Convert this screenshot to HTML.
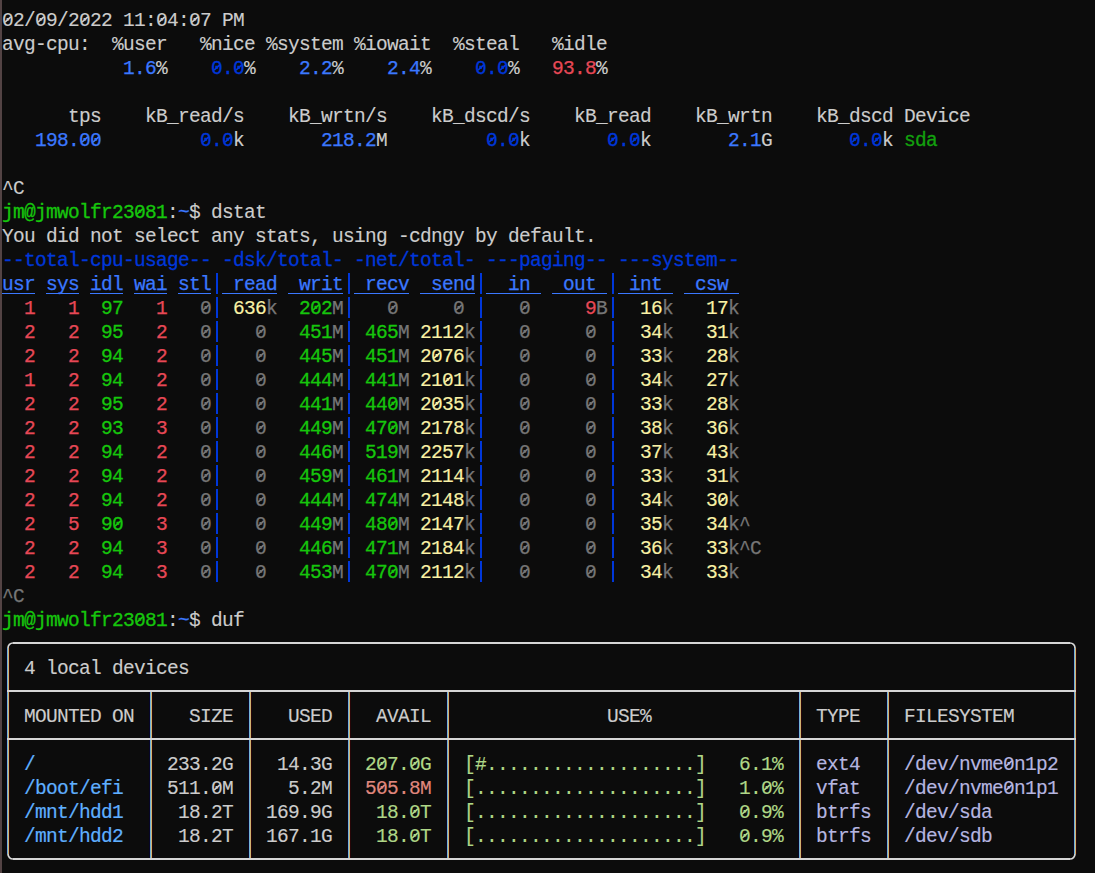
<!DOCTYPE html>
<html><head><meta charset="utf-8"><title>terminal</title>
<style>
html,body{margin:0;padding:0;background:#0c0c0c}
#t{position:relative;width:1095px;height:873px;overflow:hidden;background:#0c0c0c;font-family:"Liberation Mono",monospace;font-size:19.5px;line-height:24px;letter-spacing:-0.7019px;color:#ccc;white-space:pre}
#t i{position:absolute;display:block;box-sizing:content-box}
#t b{position:absolute;display:block;font-weight:normal;height:24px}
.cf{color:#cccccc;-webkit-text-stroke:0.12px}
.cb{color:#0037da;-webkit-text-stroke:0.3px}
.cB{color:#3b78ff;-webkit-text-stroke:0.25px}
.cr{color:#c50f1f;-webkit-text-stroke:0.25px}
.cR{color:#e74856;-webkit-text-stroke:0.25px}
.cg{color:#13a10e;-webkit-text-stroke:0.3px}
.cG{color:#16c60c;-webkit-text-stroke:0.3px}
.cy{color:#c19c00;-webkit-text-stroke:0.15px}
.cY{color:#f9f1a5;-webkit-text-stroke:0.15px}
.ck{color:#767676;-webkit-text-stroke:0.25px}
.cdb{color:#5fafff;-webkit-text-stroke:0.2px}
.cdg{color:#afd787;-webkit-text-stroke:0.15px}
.cdr{color:#e0877d;-webkit-text-stroke:0.15px}
.cdk{color:#b6b6e0;-webkit-text-stroke:0.15px}
</style></head><body>
<div id="t">
<i style="left:0;top:0;width:2px;height:873px;background:#534344"></i>
<b class="cf" style="left:2px;top:9px">02/09/2022 11:04:07 PM</b>
<b class="cf" style="left:2px;top:33px">avg-cpu:  %user   %nice %system %iowait  %steal   %idle</b>
<b class="cB" style="left:123px;top:57px">1.6</b><b class="cf" style="left:156px;top:57px">%</b><b class="cb" style="left:211px;top:57px">0.0</b><b class="cf" style="left:244px;top:57px">%</b><b class="cB" style="left:299px;top:57px">2.2</b><b class="cf" style="left:332px;top:57px">%</b><b class="cB" style="left:387px;top:57px">2.4</b><b class="cf" style="left:420px;top:57px">%</b><b class="cb" style="left:475px;top:57px">0.0</b><b class="cf" style="left:508px;top:57px">%</b><b class="cR" style="left:552px;top:57px">93.8</b><b class="cf" style="left:596px;top:57px">%</b>
<b class="cf" style="left:2px;top:105px">      tps    kB_read/s    kB_wrtn/s    kB_dscd/s    kB_read    kB_wrtn    kB_dscd Device</b>
<b class="cB" style="left:35px;top:129px">198.00</b><b class="cb" style="left:200px;top:129px">0.0</b><b class="cf" style="left:233px;top:129px">k</b><b class="cB" style="left:321px;top:129px">218.2</b><b class="cf" style="left:376px;top:129px">M</b><b class="cb" style="left:486px;top:129px">0.0</b><b class="cf" style="left:519px;top:129px">k</b><b class="cb" style="left:607px;top:129px">0.0</b><b class="cf" style="left:640px;top:129px">k</b><b class="cB" style="left:728px;top:129px">2.1</b><b class="cf" style="left:761px;top:129px">G</b><b class="cb" style="left:849px;top:129px">0.0</b><b class="cf" style="left:882px;top:129px">k</b><b class="cg" style="left:904px;top:129px">sda</b>
<b class="cf" style="left:2px;top:177px">^C</b>
<b class="cG" style="left:2px;top:201px">jm@jmwolfr23081</b><b class="cf" style="left:167px;top:201px">:</b><b class="cB" style="left:178px;top:201px">~</b><b class="cf" style="left:189px;top:201px">$ dstat</b>
<b class="cf" style="left:2px;top:225px">You did not select any stats, using -cdngy by default.</b>
<b class="cb" style="left:2px;top:249px">--total-cpu-usage-- -dsk/total- -net/total- ---paging-- ---system--</b>
<b class="cB" style="left:2px;top:273px">usr</b><b class="cB" style="left:46px;top:273px">sys</b><b class="cB" style="left:90px;top:273px">idl</b><b class="cB" style="left:134px;top:273px">wai</b><b class="cB" style="left:178px;top:273px">stl</b><b class="cB" style="left:222px;top:273px"> read</b><b class="cB" style="left:288px;top:273px"> writ</b><b class="cB" style="left:354px;top:273px"> recv</b><b class="cB" style="left:420px;top:273px"> send</b><b class="cB" style="left:486px;top:273px">  in </b><b class="cB" style="left:552px;top:273px"> out </b><b class="cB" style="left:618px;top:273px"> int </b><b class="cB" style="left:684px;top:273px"> csw </b>
<b class="cR" style="left:24px;top:297px">1</b><b class="cR" style="left:68px;top:297px">1</b><b class="cG" style="left:101px;top:297px">97</b><b class="cR" style="left:156px;top:297px">1</b><b class="ck" style="left:200px;top:297px">0</b><b class="cY" style="left:233px;top:297px">636</b><b class="ck" style="left:266px;top:297px">k</b><b class="cG" style="left:299px;top:297px">202</b><b class="ck" style="left:332px;top:297px">M</b><b class="ck" style="left:387px;top:297px">0</b><b class="ck" style="left:453px;top:297px">0</b><b class="ck" style="left:519px;top:297px">0</b><b class="cR" style="left:585px;top:297px">9</b><b class="ck" style="left:596px;top:297px">B</b><b class="cY" style="left:640px;top:297px">16</b><b class="ck" style="left:662px;top:297px">k</b><b class="cY" style="left:706px;top:297px">17</b><b class="ck" style="left:728px;top:297px">k</b>
<b class="cR" style="left:24px;top:321px">2</b><b class="cR" style="left:68px;top:321px">2</b><b class="cG" style="left:101px;top:321px">95</b><b class="cR" style="left:156px;top:321px">2</b><b class="ck" style="left:200px;top:321px">0</b><b class="ck" style="left:255px;top:321px">0</b><b class="cG" style="left:299px;top:321px">451</b><b class="ck" style="left:332px;top:321px">M</b><b class="cG" style="left:365px;top:321px">465</b><b class="ck" style="left:398px;top:321px">M</b><b class="cY" style="left:420px;top:321px">2112</b><b class="ck" style="left:464px;top:321px">k</b><b class="ck" style="left:519px;top:321px">0</b><b class="ck" style="left:585px;top:321px">0</b><b class="cY" style="left:640px;top:321px">34</b><b class="ck" style="left:662px;top:321px">k</b><b class="cY" style="left:706px;top:321px">31</b><b class="ck" style="left:728px;top:321px">k</b>
<b class="cR" style="left:24px;top:345px">2</b><b class="cR" style="left:68px;top:345px">2</b><b class="cG" style="left:101px;top:345px">94</b><b class="cR" style="left:156px;top:345px">2</b><b class="ck" style="left:200px;top:345px">0</b><b class="ck" style="left:255px;top:345px">0</b><b class="cG" style="left:299px;top:345px">445</b><b class="ck" style="left:332px;top:345px">M</b><b class="cG" style="left:365px;top:345px">451</b><b class="ck" style="left:398px;top:345px">M</b><b class="cY" style="left:420px;top:345px">2076</b><b class="ck" style="left:464px;top:345px">k</b><b class="ck" style="left:519px;top:345px">0</b><b class="ck" style="left:585px;top:345px">0</b><b class="cY" style="left:640px;top:345px">33</b><b class="ck" style="left:662px;top:345px">k</b><b class="cY" style="left:706px;top:345px">28</b><b class="ck" style="left:728px;top:345px">k</b>
<b class="cR" style="left:24px;top:369px">1</b><b class="cR" style="left:68px;top:369px">2</b><b class="cG" style="left:101px;top:369px">94</b><b class="cR" style="left:156px;top:369px">2</b><b class="ck" style="left:200px;top:369px">0</b><b class="ck" style="left:255px;top:369px">0</b><b class="cG" style="left:299px;top:369px">444</b><b class="ck" style="left:332px;top:369px">M</b><b class="cG" style="left:365px;top:369px">441</b><b class="ck" style="left:398px;top:369px">M</b><b class="cY" style="left:420px;top:369px">2101</b><b class="ck" style="left:464px;top:369px">k</b><b class="ck" style="left:519px;top:369px">0</b><b class="ck" style="left:585px;top:369px">0</b><b class="cY" style="left:640px;top:369px">34</b><b class="ck" style="left:662px;top:369px">k</b><b class="cY" style="left:706px;top:369px">27</b><b class="ck" style="left:728px;top:369px">k</b>
<b class="cR" style="left:24px;top:393px">2</b><b class="cR" style="left:68px;top:393px">2</b><b class="cG" style="left:101px;top:393px">95</b><b class="cR" style="left:156px;top:393px">2</b><b class="ck" style="left:200px;top:393px">0</b><b class="ck" style="left:255px;top:393px">0</b><b class="cG" style="left:299px;top:393px">441</b><b class="ck" style="left:332px;top:393px">M</b><b class="cG" style="left:365px;top:393px">440</b><b class="ck" style="left:398px;top:393px">M</b><b class="cY" style="left:420px;top:393px">2035</b><b class="ck" style="left:464px;top:393px">k</b><b class="ck" style="left:519px;top:393px">0</b><b class="ck" style="left:585px;top:393px">0</b><b class="cY" style="left:640px;top:393px">33</b><b class="ck" style="left:662px;top:393px">k</b><b class="cY" style="left:706px;top:393px">28</b><b class="ck" style="left:728px;top:393px">k</b>
<b class="cR" style="left:24px;top:417px">2</b><b class="cR" style="left:68px;top:417px">2</b><b class="cG" style="left:101px;top:417px">93</b><b class="cR" style="left:156px;top:417px">3</b><b class="ck" style="left:200px;top:417px">0</b><b class="ck" style="left:255px;top:417px">0</b><b class="cG" style="left:299px;top:417px">449</b><b class="ck" style="left:332px;top:417px">M</b><b class="cG" style="left:365px;top:417px">470</b><b class="ck" style="left:398px;top:417px">M</b><b class="cY" style="left:420px;top:417px">2178</b><b class="ck" style="left:464px;top:417px">k</b><b class="ck" style="left:519px;top:417px">0</b><b class="ck" style="left:585px;top:417px">0</b><b class="cY" style="left:640px;top:417px">38</b><b class="ck" style="left:662px;top:417px">k</b><b class="cY" style="left:706px;top:417px">36</b><b class="ck" style="left:728px;top:417px">k</b>
<b class="cR" style="left:24px;top:441px">2</b><b class="cR" style="left:68px;top:441px">2</b><b class="cG" style="left:101px;top:441px">94</b><b class="cR" style="left:156px;top:441px">2</b><b class="ck" style="left:200px;top:441px">0</b><b class="ck" style="left:255px;top:441px">0</b><b class="cG" style="left:299px;top:441px">446</b><b class="ck" style="left:332px;top:441px">M</b><b class="cG" style="left:365px;top:441px">519</b><b class="ck" style="left:398px;top:441px">M</b><b class="cY" style="left:420px;top:441px">2257</b><b class="ck" style="left:464px;top:441px">k</b><b class="ck" style="left:519px;top:441px">0</b><b class="ck" style="left:585px;top:441px">0</b><b class="cY" style="left:640px;top:441px">37</b><b class="ck" style="left:662px;top:441px">k</b><b class="cY" style="left:706px;top:441px">43</b><b class="ck" style="left:728px;top:441px">k</b>
<b class="cR" style="left:24px;top:465px">2</b><b class="cR" style="left:68px;top:465px">2</b><b class="cG" style="left:101px;top:465px">94</b><b class="cR" style="left:156px;top:465px">2</b><b class="ck" style="left:200px;top:465px">0</b><b class="ck" style="left:255px;top:465px">0</b><b class="cG" style="left:299px;top:465px">459</b><b class="ck" style="left:332px;top:465px">M</b><b class="cG" style="left:365px;top:465px">461</b><b class="ck" style="left:398px;top:465px">M</b><b class="cY" style="left:420px;top:465px">2114</b><b class="ck" style="left:464px;top:465px">k</b><b class="ck" style="left:519px;top:465px">0</b><b class="ck" style="left:585px;top:465px">0</b><b class="cY" style="left:640px;top:465px">33</b><b class="ck" style="left:662px;top:465px">k</b><b class="cY" style="left:706px;top:465px">31</b><b class="ck" style="left:728px;top:465px">k</b>
<b class="cR" style="left:24px;top:489px">2</b><b class="cR" style="left:68px;top:489px">2</b><b class="cG" style="left:101px;top:489px">94</b><b class="cR" style="left:156px;top:489px">2</b><b class="ck" style="left:200px;top:489px">0</b><b class="ck" style="left:255px;top:489px">0</b><b class="cG" style="left:299px;top:489px">444</b><b class="ck" style="left:332px;top:489px">M</b><b class="cG" style="left:365px;top:489px">474</b><b class="ck" style="left:398px;top:489px">M</b><b class="cY" style="left:420px;top:489px">2148</b><b class="ck" style="left:464px;top:489px">k</b><b class="ck" style="left:519px;top:489px">0</b><b class="ck" style="left:585px;top:489px">0</b><b class="cY" style="left:640px;top:489px">34</b><b class="ck" style="left:662px;top:489px">k</b><b class="cY" style="left:706px;top:489px">30</b><b class="ck" style="left:728px;top:489px">k</b>
<b class="cR" style="left:24px;top:513px">2</b><b class="cR" style="left:68px;top:513px">5</b><b class="cG" style="left:101px;top:513px">90</b><b class="cR" style="left:156px;top:513px">3</b><b class="ck" style="left:200px;top:513px">0</b><b class="ck" style="left:255px;top:513px">0</b><b class="cG" style="left:299px;top:513px">449</b><b class="ck" style="left:332px;top:513px">M</b><b class="cG" style="left:365px;top:513px">480</b><b class="ck" style="left:398px;top:513px">M</b><b class="cY" style="left:420px;top:513px">2147</b><b class="ck" style="left:464px;top:513px">k</b><b class="ck" style="left:519px;top:513px">0</b><b class="ck" style="left:585px;top:513px">0</b><b class="cY" style="left:640px;top:513px">35</b><b class="ck" style="left:662px;top:513px">k</b><b class="cY" style="left:706px;top:513px">34</b><b class="ck" style="left:728px;top:513px">k</b><b class="ck" style="left:739px;top:513px">^</b>
<b class="cR" style="left:24px;top:537px">2</b><b class="cR" style="left:68px;top:537px">2</b><b class="cG" style="left:101px;top:537px">94</b><b class="cR" style="left:156px;top:537px">3</b><b class="ck" style="left:200px;top:537px">0</b><b class="ck" style="left:255px;top:537px">0</b><b class="cG" style="left:299px;top:537px">446</b><b class="ck" style="left:332px;top:537px">M</b><b class="cG" style="left:365px;top:537px">471</b><b class="ck" style="left:398px;top:537px">M</b><b class="cY" style="left:420px;top:537px">2184</b><b class="ck" style="left:464px;top:537px">k</b><b class="ck" style="left:519px;top:537px">0</b><b class="ck" style="left:585px;top:537px">0</b><b class="cY" style="left:640px;top:537px">36</b><b class="ck" style="left:662px;top:537px">k</b><b class="cY" style="left:706px;top:537px">33</b><b class="ck" style="left:728px;top:537px">k</b><b class="ck" style="left:739px;top:537px">^C</b>
<b class="cR" style="left:24px;top:561px">2</b><b class="cR" style="left:68px;top:561px">2</b><b class="cG" style="left:101px;top:561px">94</b><b class="cR" style="left:156px;top:561px">3</b><b class="ck" style="left:200px;top:561px">0</b><b class="ck" style="left:255px;top:561px">0</b><b class="cG" style="left:299px;top:561px">453</b><b class="ck" style="left:332px;top:561px">M</b><b class="cG" style="left:365px;top:561px">470</b><b class="ck" style="left:398px;top:561px">M</b><b class="cY" style="left:420px;top:561px">2112</b><b class="ck" style="left:464px;top:561px">k</b><b class="ck" style="left:519px;top:561px">0</b><b class="ck" style="left:585px;top:561px">0</b><b class="cY" style="left:640px;top:561px">34</b><b class="ck" style="left:662px;top:561px">k</b><b class="cY" style="left:706px;top:561px">33</b><b class="ck" style="left:728px;top:561px">k</b>
<b class="ck" style="left:2px;top:585px">^C</b>
<b class="cG" style="left:2px;top:609px">jm@jmwolfr23081</b><b class="cf" style="left:167px;top:609px">:</b><b class="cB" style="left:178px;top:609px">~</b><b class="cf" style="left:189px;top:609px">$ duf</b>
<b class="cf" style="left:24px;top:657px">4 local devices</b>
<b class="cf" style="left:24px;top:705px">MOUNTED ON</b><b class="cf" style="left:189px;top:705px">SIZE</b><b class="cf" style="left:288px;top:705px">USED</b><b class="cf" style="left:376px;top:705px">AVAIL</b><b class="cf" style="left:607px;top:705px">USE%</b><b class="cf" style="left:816px;top:705px">TYPE</b><b class="cf" style="left:904px;top:705px">FILESYSTEM</b>
<b class="cdb" style="left:24px;top:753px">/</b><b class="cf" style="left:167px;top:753px">233.2G</b><b class="cf" style="left:277px;top:753px">14.3G</b><b class="cdg" style="left:365px;top:753px">207.0G</b><b class="cdg" style="left:464px;top:753px">[#...................]</b><b class="cdg" style="left:739px;top:753px">6.1%</b><b class="cdk" style="left:816px;top:753px">ext4</b><b class="cdk" style="left:904px;top:753px">/dev/nvme0n1p2</b>
<b class="cdb" style="left:24px;top:777px">/boot/efi</b><b class="cf" style="left:167px;top:777px">511.0M</b><b class="cf" style="left:288px;top:777px">5.2M</b><b class="cdr" style="left:365px;top:777px">505.8M</b><b class="cdg" style="left:464px;top:777px">[....................]</b><b class="cdg" style="left:739px;top:777px">1.0%</b><b class="cdk" style="left:816px;top:777px">vfat</b><b class="cdk" style="left:904px;top:777px">/dev/nvme0n1p1</b>
<b class="cdb" style="left:24px;top:801px">/mnt/hdd1</b><b class="cf" style="left:178px;top:801px">18.2T</b><b class="cf" style="left:266px;top:801px">169.9G</b><b class="cdg" style="left:376px;top:801px">18.0T</b><b class="cdg" style="left:464px;top:801px">[....................]</b><b class="cdg" style="left:739px;top:801px">0.9%</b><b class="cdk" style="left:816px;top:801px">btrfs</b><b class="cdk" style="left:904px;top:801px">/dev/sda</b>
<b class="cdb" style="left:24px;top:825px">/mnt/hdd2</b><b class="cf" style="left:178px;top:825px">18.2T</b><b class="cf" style="left:266px;top:825px">167.1G</b><b class="cdg" style="left:376px;top:825px">18.0T</b><b class="cdg" style="left:464px;top:825px">[....................]</b><b class="cdg" style="left:739px;top:825px">0.9%</b><b class="cdk" style="left:816px;top:825px">btrfs</b><b class="cdk" style="left:904px;top:825px">/dev/sdb</b>
<i style="left:2px;top:293px;width:33px;height:1px;background:#3b78ff"></i>
<i style="left:46px;top:293px;width:33px;height:1px;background:#3b78ff"></i>
<i style="left:90px;top:293px;width:33px;height:1px;background:#3b78ff"></i>
<i style="left:134px;top:293px;width:33px;height:1px;background:#3b78ff"></i>
<i style="left:178px;top:293px;width:33px;height:1px;background:#3b78ff"></i>
<i style="left:222px;top:293px;width:55px;height:1px;background:#3b78ff"></i>
<i style="left:288px;top:293px;width:55px;height:1px;background:#3b78ff"></i>
<i style="left:354px;top:293px;width:55px;height:1px;background:#3b78ff"></i>
<i style="left:420px;top:293px;width:55px;height:1px;background:#3b78ff"></i>
<i style="left:486px;top:293px;width:55px;height:1px;background:#3b78ff"></i>
<i style="left:552px;top:293px;width:55px;height:1px;background:#3b78ff"></i>
<i style="left:618px;top:293px;width:55px;height:1px;background:#3b78ff"></i>
<i style="left:684px;top:293px;width:55px;height:1px;background:#3b78ff"></i>
<i style="left:216px;top:273px;width:2px;height:21px;background:#0037da"></i>
<i style="left:348px;top:273px;width:2px;height:21px;background:#0037da"></i>
<i style="left:480px;top:273px;width:2px;height:21px;background:#0037da"></i>
<i style="left:612px;top:273px;width:2px;height:21px;background:#0037da"></i>
<i style="left:216px;top:297px;width:2px;height:21px;background:#0037da"></i>
<i style="left:348px;top:297px;width:2px;height:21px;background:#0037da"></i>
<i style="left:480px;top:297px;width:2px;height:21px;background:#0037da"></i>
<i style="left:612px;top:297px;width:2px;height:21px;background:#0037da"></i>
<i style="left:216px;top:321px;width:2px;height:21px;background:#0037da"></i>
<i style="left:348px;top:321px;width:2px;height:21px;background:#0037da"></i>
<i style="left:480px;top:321px;width:2px;height:21px;background:#0037da"></i>
<i style="left:612px;top:321px;width:2px;height:21px;background:#0037da"></i>
<i style="left:216px;top:345px;width:2px;height:21px;background:#0037da"></i>
<i style="left:348px;top:345px;width:2px;height:21px;background:#0037da"></i>
<i style="left:480px;top:345px;width:2px;height:21px;background:#0037da"></i>
<i style="left:612px;top:345px;width:2px;height:21px;background:#0037da"></i>
<i style="left:216px;top:369px;width:2px;height:21px;background:#0037da"></i>
<i style="left:348px;top:369px;width:2px;height:21px;background:#0037da"></i>
<i style="left:480px;top:369px;width:2px;height:21px;background:#0037da"></i>
<i style="left:612px;top:369px;width:2px;height:21px;background:#0037da"></i>
<i style="left:216px;top:393px;width:2px;height:21px;background:#0037da"></i>
<i style="left:348px;top:393px;width:2px;height:21px;background:#0037da"></i>
<i style="left:480px;top:393px;width:2px;height:21px;background:#0037da"></i>
<i style="left:612px;top:393px;width:2px;height:21px;background:#0037da"></i>
<i style="left:216px;top:417px;width:2px;height:21px;background:#0037da"></i>
<i style="left:348px;top:417px;width:2px;height:21px;background:#0037da"></i>
<i style="left:480px;top:417px;width:2px;height:21px;background:#0037da"></i>
<i style="left:612px;top:417px;width:2px;height:21px;background:#0037da"></i>
<i style="left:216px;top:441px;width:2px;height:21px;background:#0037da"></i>
<i style="left:348px;top:441px;width:2px;height:21px;background:#0037da"></i>
<i style="left:480px;top:441px;width:2px;height:21px;background:#0037da"></i>
<i style="left:612px;top:441px;width:2px;height:21px;background:#0037da"></i>
<i style="left:216px;top:465px;width:2px;height:21px;background:#0037da"></i>
<i style="left:348px;top:465px;width:2px;height:21px;background:#0037da"></i>
<i style="left:480px;top:465px;width:2px;height:21px;background:#0037da"></i>
<i style="left:612px;top:465px;width:2px;height:21px;background:#0037da"></i>
<i style="left:216px;top:489px;width:2px;height:21px;background:#0037da"></i>
<i style="left:348px;top:489px;width:2px;height:21px;background:#0037da"></i>
<i style="left:480px;top:489px;width:2px;height:21px;background:#0037da"></i>
<i style="left:612px;top:489px;width:2px;height:21px;background:#0037da"></i>
<i style="left:216px;top:513px;width:2px;height:21px;background:#0037da"></i>
<i style="left:348px;top:513px;width:2px;height:21px;background:#0037da"></i>
<i style="left:480px;top:513px;width:2px;height:21px;background:#0037da"></i>
<i style="left:612px;top:513px;width:2px;height:21px;background:#0037da"></i>
<i style="left:216px;top:537px;width:2px;height:21px;background:#0037da"></i>
<i style="left:348px;top:537px;width:2px;height:21px;background:#0037da"></i>
<i style="left:480px;top:537px;width:2px;height:21px;background:#0037da"></i>
<i style="left:612px;top:537px;width:2px;height:21px;background:#0037da"></i>
<i style="left:216px;top:561px;width:2px;height:21px;background:#0037da"></i>
<i style="left:348px;top:561px;width:2px;height:21px;background:#0037da"></i>
<i style="left:480px;top:561px;width:2px;height:21px;background:#0037da"></i>
<i style="left:612px;top:561px;width:2px;height:21px;background:#0037da"></i>
<svg style="position:absolute;left:0;top:0" width="1095" height="873" viewBox="0 0 1095 873"><path d="M8 648A5 5 0 0 1 13 643M1070 643A5 5 0 0 1 1075 648M1075 854A5 5 0 0 1 1070 859M13 859A5 5 0 0 1 8 854" fill="none" stroke="#d6d6d6" stroke-width="1.7"/></svg>
<i style="left:6px;top:648px;width:4px;height:206px;background:linear-gradient(to right,#070528 0 1px,#73b4d7 1px 2px,#d2b270 2px 3px,#280608 3px 4px)"></i>
<i style="left:1073px;top:648px;width:4px;height:206px;background:linear-gradient(to right,#070528 0 1px,#73b4d7 1px 2px,#d2b270 2px 3px,#280608 3px 4px)"></i>
<i style="left:149px;top:690px;width:4px;height:170px;background:linear-gradient(to right,#070528 0 1px,#73b4d7 1px 2px,#d2b270 2px 3px,#280608 3px 4px)"></i>
<i style="left:248px;top:690px;width:4px;height:170px;background:linear-gradient(to right,#070528 0 1px,#73b4d7 1px 2px,#d2b270 2px 3px,#280608 3px 4px)"></i>
<i style="left:347px;top:690px;width:4px;height:170px;background:linear-gradient(to right,#070528 0 1px,#73b4d7 1px 2px,#d2b270 2px 3px,#280608 3px 4px)"></i>
<i style="left:446px;top:690px;width:4px;height:170px;background:linear-gradient(to right,#070528 0 1px,#73b4d7 1px 2px,#d2b270 2px 3px,#280608 3px 4px)"></i>
<i style="left:798px;top:690px;width:4px;height:170px;background:linear-gradient(to right,#070528 0 1px,#73b4d7 1px 2px,#d2b270 2px 3px,#280608 3px 4px)"></i>
<i style="left:886px;top:690px;width:4px;height:170px;background:linear-gradient(to right,#070528 0 1px,#73b4d7 1px 2px,#d2b270 2px 3px,#280608 3px 4px)"></i>
<i style="left:13px;top:642px;width:1057px;height:2px;background:#d6d6d6"></i>
<i style="left:7px;top:690px;width:1069px;height:2px;background:#d6d6d6"></i>
<i style="left:7px;top:738px;width:1069px;height:2px;background:#d6d6d6"></i>
<i style="left:13px;top:858px;width:1057px;height:2px;background:#d6d6d6"></i>
<svg style="position:absolute;left:0;top:0" width="1095" height="873" viewBox="0 0 1095 873" fill="none" stroke-width="1.6"><path stroke="#cccccc" d="M5.0 22.1l5.8 -5.2M38.0 22.1l5.8 -5.2M82.0 22.1l5.8 -5.2M159.0 22.1l5.8 -5.2M192.0 22.1l5.8 -5.2M214.0 790.1l5.8 -5.2"/><path stroke="#0037da" d="M214.0 70.1l5.8 -5.2M236.0 70.1l5.8 -5.2M478.0 70.1l5.8 -5.2M500.0 70.1l5.8 -5.2M203.0 142.1l5.8 -5.2M225.0 142.1l5.8 -5.2M489.0 142.1l5.8 -5.2M511.0 142.1l5.8 -5.2M610.0 142.1l5.8 -5.2M632.0 142.1l5.8 -5.2M852.0 142.1l5.8 -5.2M874.0 142.1l5.8 -5.2"/><path stroke="#3b78ff" d="M82.0 142.1l5.8 -5.2M93.0 142.1l5.8 -5.2"/><path stroke="#16c60c" d="M137.0 214.1l5.8 -5.2M313.0 310.1l5.8 -5.2M390.0 406.1l5.8 -5.2M390.0 430.1l5.8 -5.2M115.0 526.1l5.8 -5.2M390.0 526.1l5.8 -5.2M390.0 574.1l5.8 -5.2M137.0 622.1l5.8 -5.2"/><path stroke="#767676" d="M203.0 310.1l5.8 -5.2M390.0 310.1l5.8 -5.2M456.0 310.1l5.8 -5.2M522.0 310.1l5.8 -5.2M203.0 334.1l5.8 -5.2M258.0 334.1l5.8 -5.2M522.0 334.1l5.8 -5.2M588.0 334.1l5.8 -5.2M203.0 358.1l5.8 -5.2M258.0 358.1l5.8 -5.2M522.0 358.1l5.8 -5.2M588.0 358.1l5.8 -5.2M203.0 382.1l5.8 -5.2M258.0 382.1l5.8 -5.2M522.0 382.1l5.8 -5.2M588.0 382.1l5.8 -5.2M203.0 406.1l5.8 -5.2M258.0 406.1l5.8 -5.2M522.0 406.1l5.8 -5.2M588.0 406.1l5.8 -5.2M203.0 430.1l5.8 -5.2M258.0 430.1l5.8 -5.2M522.0 430.1l5.8 -5.2M588.0 430.1l5.8 -5.2M203.0 454.1l5.8 -5.2M258.0 454.1l5.8 -5.2M522.0 454.1l5.8 -5.2M588.0 454.1l5.8 -5.2M203.0 478.1l5.8 -5.2M258.0 478.1l5.8 -5.2M522.0 478.1l5.8 -5.2M588.0 478.1l5.8 -5.2M203.0 502.1l5.8 -5.2M258.0 502.1l5.8 -5.2M522.0 502.1l5.8 -5.2M588.0 502.1l5.8 -5.2M203.0 526.1l5.8 -5.2M258.0 526.1l5.8 -5.2M522.0 526.1l5.8 -5.2M588.0 526.1l5.8 -5.2M203.0 550.1l5.8 -5.2M258.0 550.1l5.8 -5.2M522.0 550.1l5.8 -5.2M588.0 550.1l5.8 -5.2M203.0 574.1l5.8 -5.2M258.0 574.1l5.8 -5.2M522.0 574.1l5.8 -5.2M588.0 574.1l5.8 -5.2"/><path stroke="#f9f1a5" d="M434.0 358.1l5.8 -5.2M445.0 382.1l5.8 -5.2M434.0 406.1l5.8 -5.2M720.0 502.1l5.8 -5.2"/><path stroke="#afd787" d="M379.0 766.1l5.8 -5.2M412.0 766.1l5.8 -5.2M764.0 790.1l5.8 -5.2M412.0 814.1l5.8 -5.2M742.0 814.1l5.8 -5.2M412.0 838.1l5.8 -5.2M742.0 838.1l5.8 -5.2"/><path stroke="#b6b6e0" d="M1006.0 766.1l5.8 -5.2M1006.0 790.1l5.8 -5.2"/><path stroke="#e0877d" d="M379.0 790.1l5.8 -5.2"/></svg>
</div>
</body></html>
